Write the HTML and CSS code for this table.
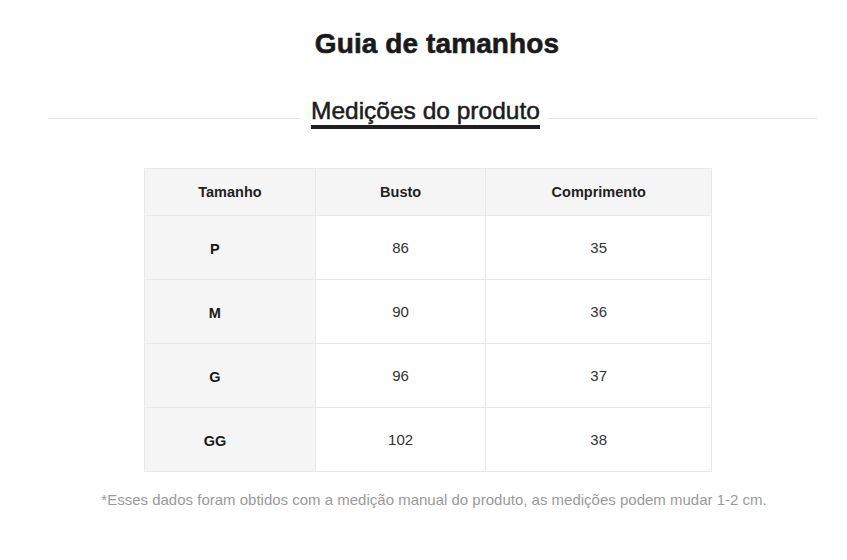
FILE: index.html
```html
<!DOCTYPE html>
<html lang="pt">
<head>
<meta charset="utf-8">
<title>Guia de tamanhos</title>
<link rel="stylesheet" href="styles.css">
</head>
<body>
<div class="page">
  <h1 class="title">Guia de tamanhos</h1>
  <div class="section-head">
    <span class="rule"></span>
    <div class="section-title">
      <span class="section-text">Medições do produto</span>
      <span class="section-bar"></span>
    </div>
    <span class="rule rule-right"></span>
  </div>
  <table class="sizes">
    <thead>
      <tr><th class="c1">Tamanho</th><th class="c2">Busto</th><th class="c3">Comprimento</th></tr>
    </thead>
    <tbody>
      <tr><th class="size">P</th><td>86</td><td>35</td></tr>
      <tr><th class="size">M</th><td>90</td><td>36</td></tr>
      <tr><th class="size">G</th><td>96</td><td>37</td></tr>
      <tr><th class="size">GG</th><td>102</td><td>38</td></tr>
    </tbody>
  </table>
  <p class="note">*Esses dados foram obtidos com a medição manual do produto, as medições podem mudar 1-2 cm.</p>
</div>
</body>
</html>
```
FILE: styles.css
```css
html, body {
  margin: 0;
  padding: 0;
  background: #ffffff;
}
body {
  font-family: "Liberation Sans", Arial, sans-serif;
  color: #222222;
}
.page {
  margin-left: 48px;
  width: 769px;
  display: flex;
  flex-direction: column;
  align-items: center;
}
.title {
  margin: 28px 0 0 9px;
  font-size: 28px;
  line-height: 32px;
  font-weight: 700;
  color: #1a1a1a;
  -webkit-text-stroke: 0.6px #1a1a1a;
  letter-spacing: 0.1px;
}
.section-head {
  align-self: stretch;
  display: flex;
  align-items: flex-start;
  margin-top: 37px;
}
.rule {
  height: 1px;
  background: #e6e6e6;
  margin-top: 21px;
  width: 252px;
  margin-right: 11px;
}
.rule-right {
  flex: 1;
  width: auto;
  margin-right: 0;
  margin-left: 7px;
}
.section-title {
  display: flex;
  flex-direction: column;
}
.section-text {
  font-size: 24.5px;
  line-height: 27px;
  color: #1c1c1c;
  -webkit-text-stroke: 0.5px #1c1c1c;
  white-space: nowrap;
}
.section-bar {
  height: 4px;
  background: #1f1f1f;
  margin-top: 1px;
}
.sizes {
  margin-top: 39px;
  margin-right: 9px;
  border-collapse: collapse;
  width: 568px;
  font-size: 15px;
}
.sizes th, .sizes td {
  border: 1px solid #e8e8e8;
  text-align: center;
  padding: 0;
}
.sizes thead th {
  height: 46px;
  background: #f5f5f5;
  font-size: 14.5px;
  font-weight: 700;
  color: #222222;
}
.c1 { width: 171px; }
.c2 { width: 171px; }
.c3 { width: 226px; }
.sizes tbody th.size {
  background: #f5f5f5;
  font-weight: 700;
  font-size: 14.5px;
  color: #1a1a1a;
  padding-right: 30px;
  height: 61px;
  padding-top: 2px;
}
.sizes tbody td {
  color: #333333;
  background: #ffffff;
  padding-bottom: 1px;
}
.note {
  margin: 19px 0 0 3px;
  font-size: 15px;
  color: #9a9a9a;
}
```
